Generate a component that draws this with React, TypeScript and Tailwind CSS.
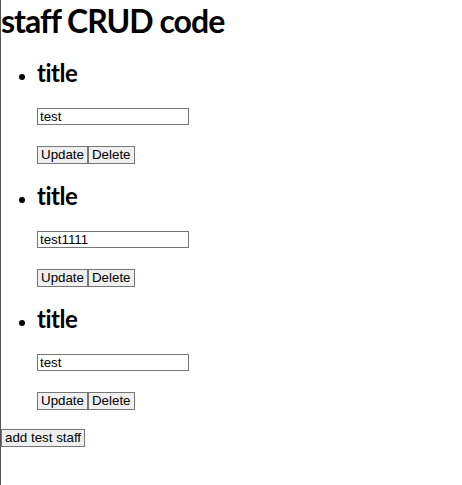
import React, { useState } from 'react';

interface Staff {
  id: number;
  title: string;
  name: string;
}

const initialStaff: Staff[] = [
  { id: 1, title: 'title', name: 'test' },
  { id: 2, title: 'title', name: 'test1111' },
  { id: 3, title: 'title', name: 'test' },
];

const btn =
  'bg-[#efefef] border border-[#767676] text-black text-[13.33px] leading-[16px] px-[3px] py-0 font-["Liberation_Sans",Arial,sans-serif]';

export default function App() {
  const [staff, setStaff] = useState<Staff[]>(initialStaff);

  return (
    <div className="min-h-[485px] border-l border-[#555555] bg-white text-black">
      <h1 className='m-0 pt-[1px] h-[40px] text-[32px] leading-[40px] font-bold tracking-[-1px] font-["Lato",sans-serif]'>
        staff CRUD code
      </h1>

      <ul className="mt-[17px] list-disc pl-[36px]">
        {staff.map((s) => (
          <li key={s.id} className="pb-[16px] marker:text-[16px]">
            <h2 className='m-0 text-[24px] leading-[32px] font-bold tracking-[-0.5px] font-["Lato",sans-serif]'>
              {s.title}
            </h2>
            <div className="mt-[19px]">
              <input
                defaultValue={s.name}
                className='block w-[152px] h-[17px] border border-[#767676] px-[2px] text-[13.33px] leading-[15px] font-["Liberation_Sans",Arial,sans-serif]'
              />
            </div>
            <div className="mt-[21px] flex">
              <button className={btn}>Update</button>
              <button className={btn} onClick={() => setStaff(staff.filter((x) => x.id !== s.id))}>
                Delete
              </button>
            </div>
          </li>
        ))}
      </ul>

      <div className="-mt-[2px]">
        <button
          className={btn}
          onClick={() => setStaff([...staff, { id: Date.now(), title: 'title', name: 'test' }])}
        >
          add test staff
        </button>
      </div>
    </div>
  );
}
